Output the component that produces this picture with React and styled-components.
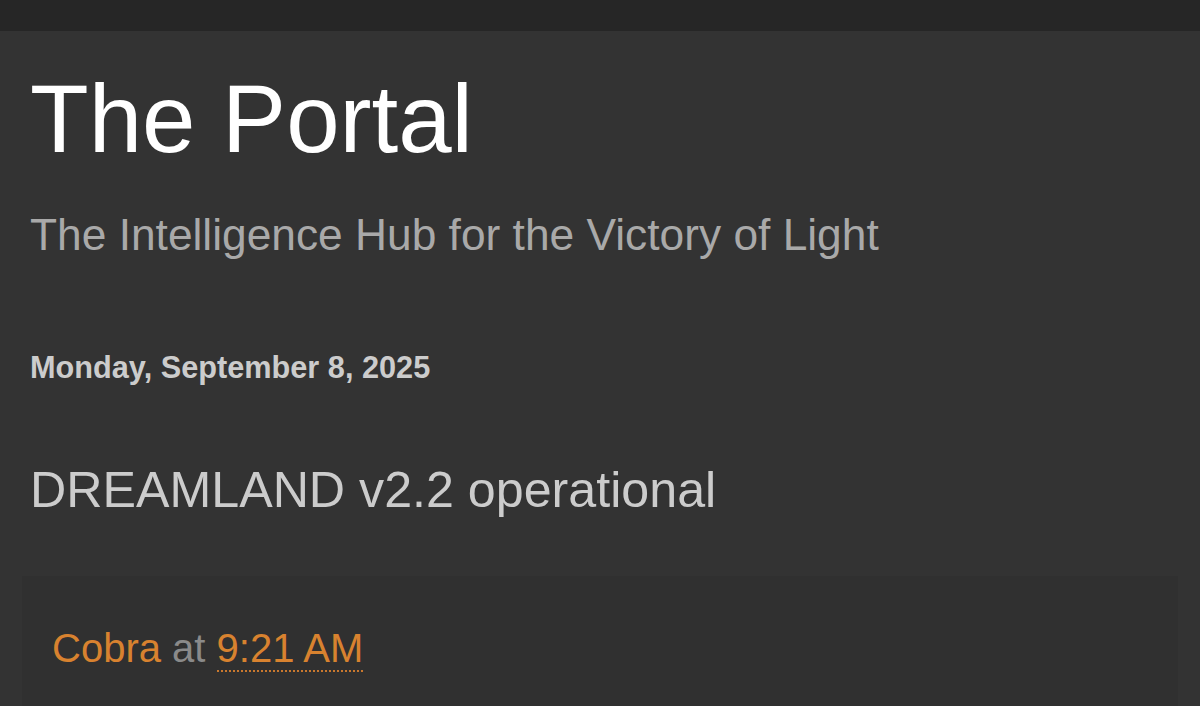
import React from "react";
import styled, { createGlobalStyle } from "styled-components";

const Global = createGlobalStyle`
  html, body {
    margin: 0;
    padding: 0;
    background: #333333;
    font-family: "Liberation Sans", Arial, sans-serif;
  }
`;

const TopBar = styled.div`
  height: 31px;
  background: #262626;
`;

const Main = styled.main`
  padding: 0 22px;
  display: flex;
  flex-direction: column;
`;

const Header = styled.header`
  padding: 40px 8px 0;
`;

const Title = styled.h1`
  margin: 0;
  font-size: 96px;
  line-height: 1;
  font-weight: 400;
  color: #ffffff;
`;

const Tagline = styled.p`
  margin: 46px 0 0;
  font-size: 44.3px;
  line-height: 1;
  color: #a9a9a9;
`;

const DateHeader = styled.h2`
  margin: 96px 8px 0;
  font-size: 30.7px;
  line-height: 1;
  font-weight: 700;
  color: #cccccc;
`;

const PostTitle = styled.h3`
  margin: 81px 8px 0;
  font-size: 50.2px;
  line-height: 1;
  font-weight: 400;
  color: #cccccc;
`;

const PostCard = styled.article`
  margin-top: 61px;
  background: #303030;
  padding: 52px 30px 60px;
  min-height: 200px;
`;

const Byline = styled.div`
  font-size: 40px;
  line-height: 1;
  color: #8a8a8a;
`;

const Link = styled.a`
  color: #d8822f;
  text-decoration: none;
`;

const Time = styled.abbr`
  color: #d8822f;
  text-decoration: none;
  border-bottom: 2px dotted #c9782e;
`;

export default function App() {
  return (
    <>
      <Global />
      <TopBar />
      <Main>
        <Header>
          <Title>The Portal</Title>
          <Tagline>The Intelligence Hub for the Victory of Light</Tagline>
        </Header>
        <DateHeader>Monday, September 8, 2025</DateHeader>
        <PostTitle>DREAMLAND v2.2 operational</PostTitle>
        <PostCard>
          <Byline>
            <Link href="#">Cobra</Link> at <Time title="2025-09-08T09:21:00">9:21 AM</Time>
          </Byline>
        </PostCard>
      </Main>
    </>
  );
}
